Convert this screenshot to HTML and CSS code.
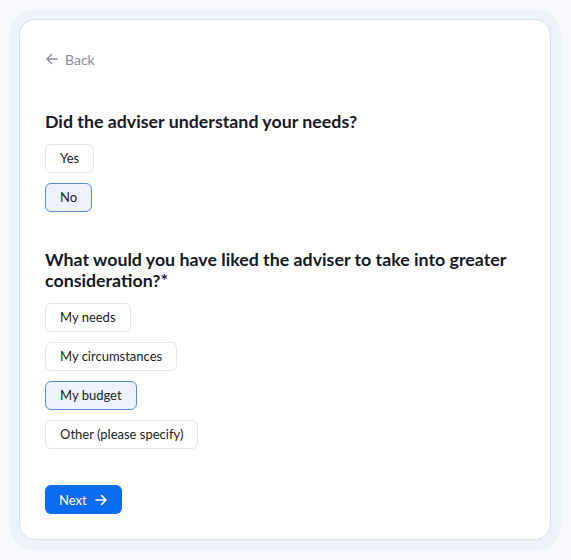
FILE: index.html
```html
<!DOCTYPE html>
<html lang="en">
<head>
<meta charset="utf-8">
<link rel="stylesheet" href="styles.css">
</head>
<body>
<div class="frame">
  <main class="card">
    <a class="back" href="#">
      <svg class="back-icon" width="14" height="14" viewBox="0 0 14 14" fill="none" stroke="currentColor" stroke-width="1.4" stroke-linecap="round" stroke-linejoin="round"><path d="M12 7H2M6.5 2.5 2 7l4.5 4.5"/></svg>
      <span>Back</span>
    </a>

    <section class="question q1">
      <h2 class="q-title">Did the adviser understand your needs?</h2>
      <div class="options">
        <button class="opt">Yes</button>
        <button class="opt selected">No</button>
      </div>
    </section>

    <section class="question q2">
      <h2 class="q-title">What would you have liked the adviser to take into greater consideration?*</h2>
      <div class="options">
        <button class="opt">My needs</button>
        <button class="opt">My circumstances</button>
        <button class="opt selected">My budget</button>
        <button class="opt">Other (please specify)</button>
      </div>
    </section>

    <button class="next">Next
      <svg width="14" height="14" viewBox="0 0 14 14" fill="none" stroke="currentColor" stroke-width="1.6" stroke-linecap="round" stroke-linejoin="round"><path d="M2 7h10M7.5 2.5 12 7l-4.5 4.5"/></svg>
    </button>
  </main>
</div>
</body>
</html>
```
FILE: styles.css
```css
* { box-sizing: border-box; }
html, body { margin: 0; padding: 0; }
body {
  background: #f7f8fb;
  font-family: "Lato", "Inter", sans-serif;
  color: #14161f;
  width: 571px;
  height: 560px;
  padding: 10px;
}
.frame {
  background: #edf1fa;
  border-radius: 24px;
  padding: 9px 10px 10px 9px;
  height: 540px;
}
.card {
  background: #fff;
  border: 1px solid #d8deea;
  border-radius: 16px;
  height: 521px;
  padding: 29px 25px 0 25px;
  display: flex;
  flex-direction: column;
}
.back {
  display: flex;
  align-items: center;
  gap: 6px;
  color: #8a8d96;
  text-decoration: none;
  font-size: 14px;
  height: 20px;
}
.back-icon { color: #8a8d96; }
.question { display: flex; flex-direction: column; }
.q1 { margin-top: 42px; }
.q2 { margin-top: 37px; }
.q-title {
  margin: 0;
  font-size: 17.8px;
  font-weight: 700;
  line-height: 21px;
  color: #161824;
  letter-spacing: 0;
}
.options {
  display: flex;
  flex-direction: column;
  align-items: flex-start;
  gap: 10px;
  margin-top: 12px;
}
.q2 .options { margin-top: 12px; }
.opt {
  font-family: inherit;
  font-size: 13px;
  color: #1c1d24;
  background: #fff;
  border: 1px solid #e1e5ec;
  border-radius: 6px;
  height: 29px;
  padding: 0 14px;
  line-height: 27px;
}
.opt.selected {
  background: #edf2fc;
  border-color: #5b8cd8;
}
.next {
  margin-top: 36px;
  align-self: flex-start;
  display: flex;
  align-items: center;
  gap: 7px;
  height: 29px;
  padding: 0 14px;
  border: none;
  border-radius: 6px;
  background: #0b6cf0;
  color: #fff;
  font-family: inherit;
  font-size: 13px;
}
```
